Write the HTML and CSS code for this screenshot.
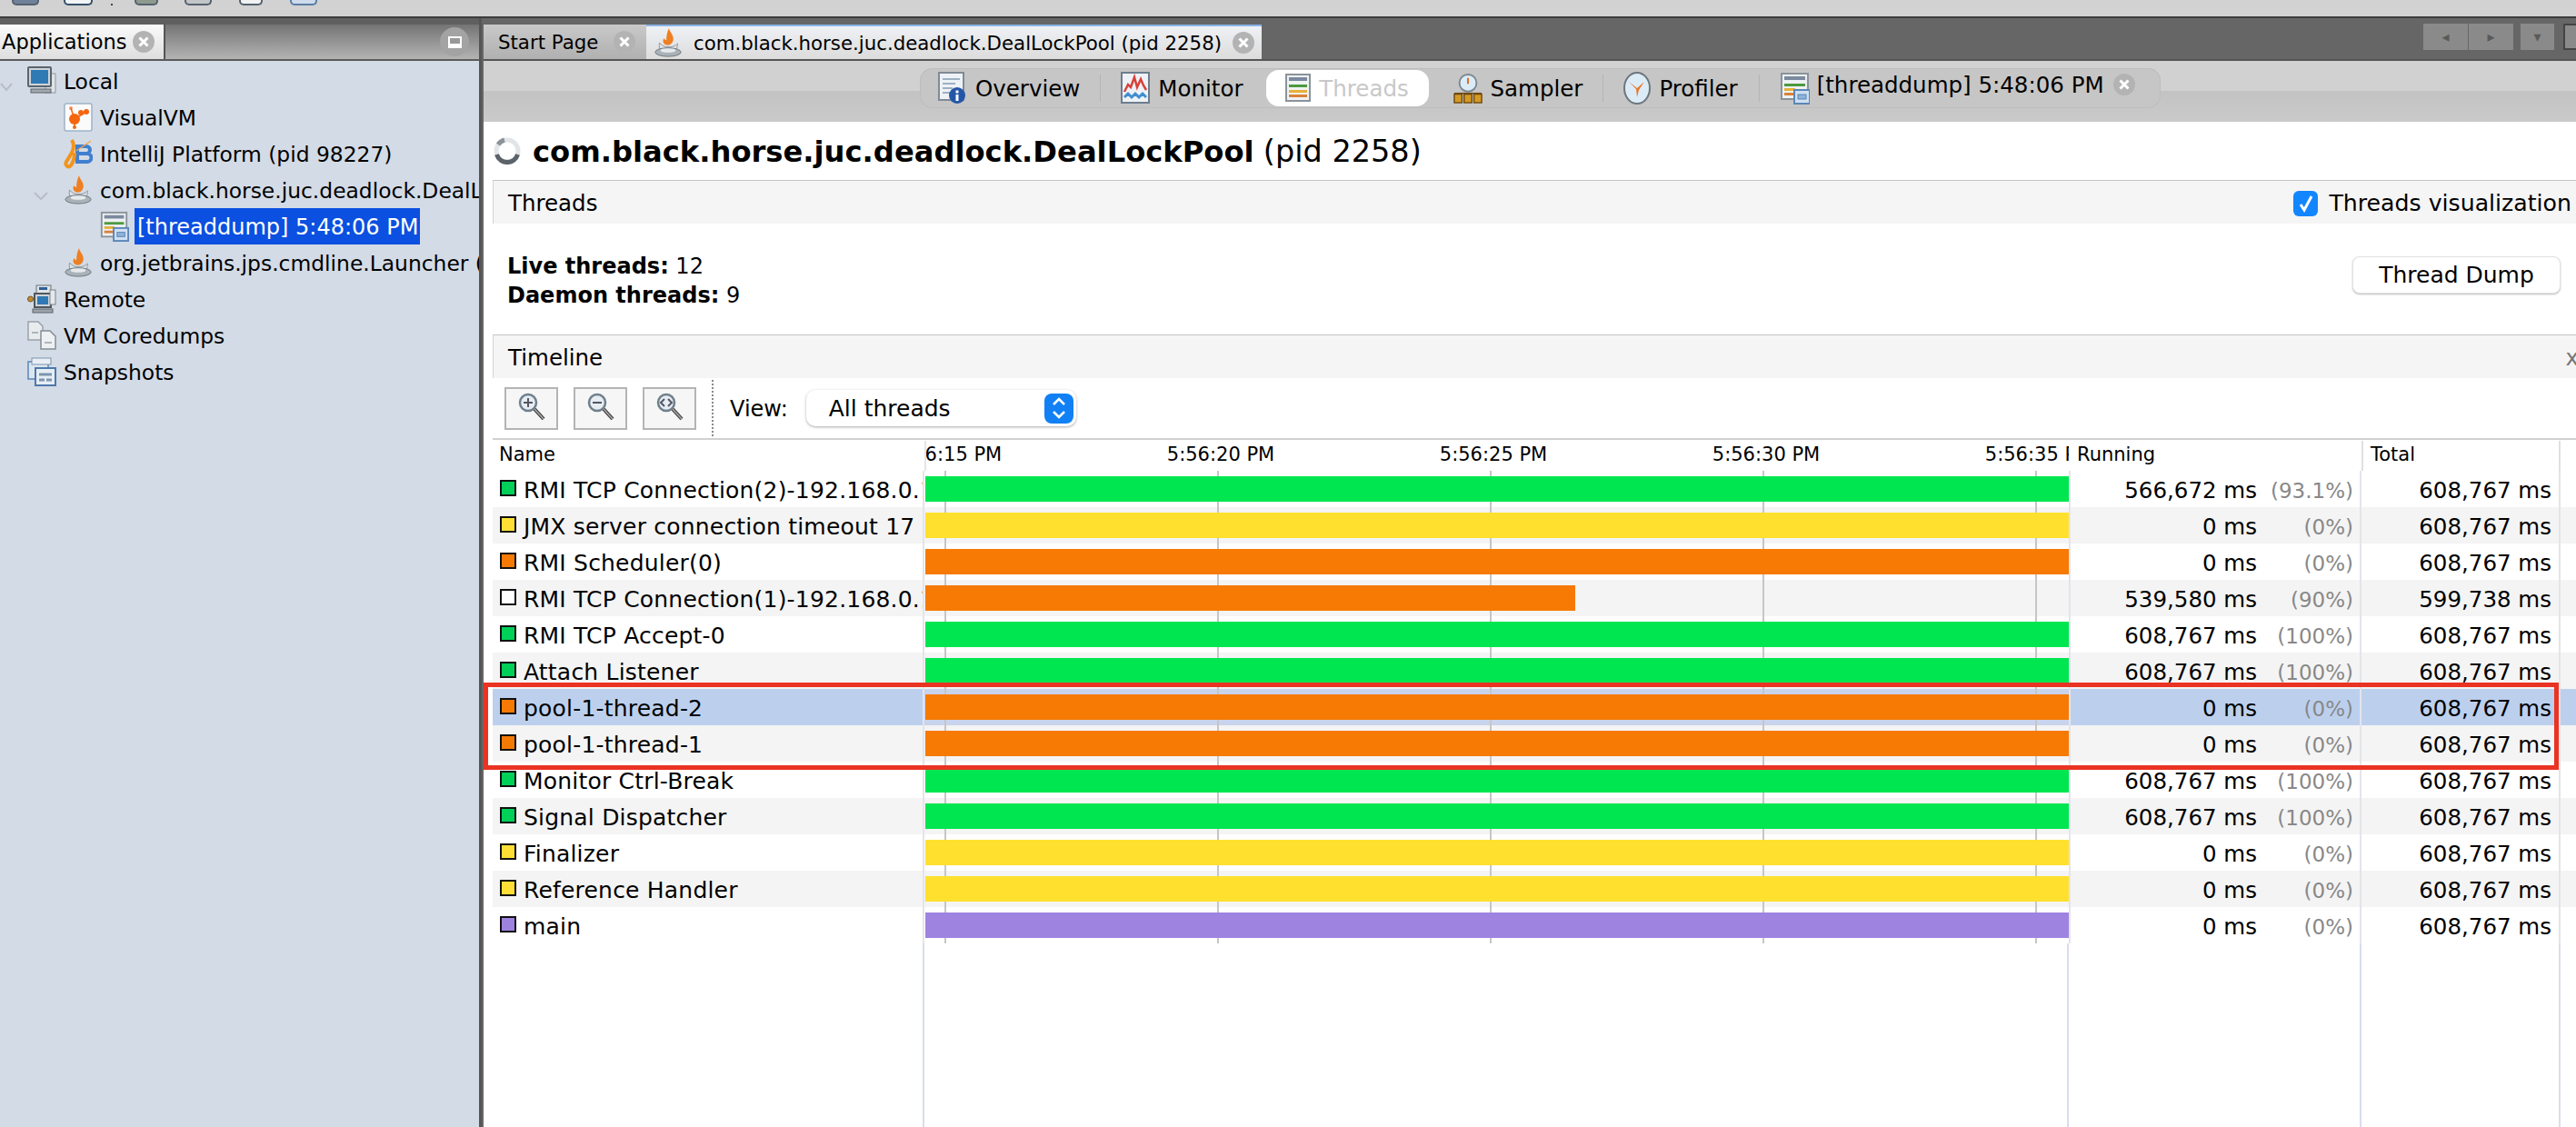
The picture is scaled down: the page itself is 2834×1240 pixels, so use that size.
FILE: index.html
```html
<!DOCTYPE html>
<html lang="en">

<head>
    <meta charset="utf-8">
    <title>VisualVM</title>
    <link rel="stylesheet" href="styles.css">
</head>

<body>
    <!-- shared icons -->
    <svg class="defs" width="0" height="0">
        <symbol id="i-java" viewBox="0 0 32 36">
            <path d="M17 1c1 5 6 8 5 14-1 4-4 6-7 6-4-1-6-4-4-8 1 1 2 2 3 2 0-5 1-10 3-14z" fill="#ee7f22"/>
            <path d="M6 18c-1 4 0 9 3 11h14c3-2 4-6 4-10-2 3-7 4-11 4s-8-2-10-5z" fill="#dfe3e6" stroke="#8d969c"/>
            <ellipse cx="16" cy="29" rx="15" ry="5" fill="#a9b2b8" stroke="#6e777d"/>
            <ellipse cx="16" cy="27" rx="9" ry="2.5" fill="#e6eaed"/>
        </symbol>
        <symbol id="i-dump" viewBox="0 0 32 36">
            <rect x="1" y="2" width="29" height="28" fill="#eef1f3" stroke="#8a939b" stroke-width="2"/>
            <rect x="4" y="5" width="23" height="4" fill="#7b8aa0"/>
            <rect x="4" y="13" width="23" height="3" fill="#4c9a3e"/>
            <rect x="4" y="18" width="12" height="3" fill="#e8b13a"/>
            <rect x="4" y="23" width="12" height="3" fill="#d9823a"/>
            <rect x="15" y="20" width="17" height="15" fill="#cfe0f2" stroke="#5b86b8" stroke-width="2"/>
            <rect x="19" y="25" width="9" height="5" fill="#8fb2d8" stroke="#5b86b8"/>
        </symbol>
        <symbol id="i-close" viewBox="0 0 24 24">
            <circle cx="12" cy="12" r="12" fill="#b3b3b3"/>
            <path d="M7.5 7.5l9 9M16.5 7.5l-9 9" stroke="#fff" stroke-width="3"/>
        </symbol>
        <symbol id="i-zoom" viewBox="0 0 30 34">
            <circle cx="11" cy="11" r="9" fill="#e6edf2" stroke="#6f7f8c" stroke-width="2.5"/>
            <path d="M18 18l10 11" stroke="#444" stroke-width="4"/>
            <path d="M18 18l10 11" stroke="#aaa" stroke-width="1.5"/>
        </symbol>
    </svg>

    <div class="topbar">
        <span class="tb-icon tb-a"></span>
        <span class="tb-icon tb-b"></span>
        <span class="tb-dot"></span>
        <span class="tb-icon tb-c"></span>
        <span class="tb-icon tb-d"></span>
        <span class="tb-icon tb-e"></span>
        <span class="tb-icon tb-f"></span>
    </div>

    <div class="workspace">
        <aside class="apps">
            <div class="apps-tabs">
                <div class="apps-tab">Applications
                    <svg class="close"><use href="#i-close"/></svg>
                </div>
                <div class="apps-rest">
                    <span class="minimize"><i></i></span>
                </div>
            </div>
            <ul class="tree">
                <li class="tree-row">
                    <span class="twist lvl0"><svg width="14" height="10" viewBox="0 0 14 10"><path d="M1 1l6 7 6-7" fill="none" stroke="#b7bec6" stroke-width="2"/></svg></span>
                    <svg class="tree-icon" viewBox="0 0 32 32">
                        <rect x="20" y="8" width="11" height="21" fill="#dfe3e7" stroke="#8f979e"/>
                        <rect x="1" y="1" width="25" height="21" rx="1" fill="#cdd3d8" stroke="#5c646b" stroke-width="2"/>
                        <rect x="4" y="4" width="19" height="15" fill="#2f79b5"/>
                        <rect x="4" y="25" width="22" height="4" fill="#a2a9af" stroke="#5c646b"/>
                    </svg>
                    Local
                </li>
                <li class="tree-row">
                    <span class="twist lvl1"></span>
                    <svg class="tree-icon" viewBox="0 0 32 32">
                        <rect x="1" y="1" width="30" height="30" rx="2" fill="#fbfbfb" stroke="#9fb4c8" stroke-width="1.5"/>
                        <circle cx="12" cy="18" r="6" fill="#f4660e"/>
                        <circle cx="19" cy="11" r="3" fill="#f4660e"/>
                        <circle cx="25" cy="10" r="3" fill="#f4660e"/>
                        <circle cx="8" cy="6" r="2" fill="#f7926a"/>
                        <circle cx="12" cy="27" r="2" fill="#f4660e"/>
                        <path d="M12 18L8 6M12 18l13-8M12 18v9" stroke="#f4660e" stroke-width="1.5"/>
                    </svg>
                    VisualVM
                </li>
                <li class="tree-row">
                    <span class="twist lvl1"></span>
                    <svg class="tree-icon" viewBox="0 0 32 32">
                        <path d="M15 8h10a4 4 0 0 1 0 8h-10zM15 16h11a4.500 4.500 0 0 1 0 9h-11z" fill="none" stroke="#3f7fd0" stroke-width="4"/>
                        <path d="M9 1c3 5 2 10 0 14l-6 10c-2 4 2 7 5 4 3-4 4-10 4-14" fill="none" stroke="#f2941c" stroke-width="4"/>
                        <path d="M14 13L30 2" stroke="#f2a64a" stroke-width="1.500"/>
                    </svg>
                    IntelliJ Platform (pid 98227)
                </li>
                <li class="tree-row">
                    <span class="twist lvl1 open"><svg width="16" height="10" viewBox="0 0 16 10"><path d="M1 1l7 7 7-7" fill="none" stroke="#b7bec6" stroke-width="2"/></svg></span>
                    <svg class="tree-icon"><use href="#i-java"/></svg>
                    com.black.horse.juc.deadlock.DealLockPool (pid 2258)
                </li>
                <li class="tree-row">
                    <span class="twist lvl2"></span>
                    <svg class="tree-icon dump-icon"><use href="#i-dump"/></svg>
                    <span class="selected">[threaddump] 5:48:06 PM</span>
                </li>
                <li class="tree-row">
                    <span class="twist lvl1"></span>
                    <svg class="tree-icon"><use href="#i-java"/></svg>
                    org.jetbrains.jps.cmdline.Launcher (pid 98228)
                </li>
                <li class="tree-row">
                    <span class="twist lvl0"></span>
                    <svg class="tree-icon" viewBox="0 0 32 32">
                        <rect x="10" y="1" width="16" height="12" fill="#dfe3e7" stroke="#6a7279"/>
                        <rect x="13" y="3" width="9" height="3" fill="#2c5f96"/>
                        <rect x="8" y="10" width="18" height="15" fill="#cdd3d8" stroke="#4f575e" stroke-width="2"/>
                        <rect x="11" y="13" width="12" height="9" fill="#2f79b5"/>
                        <circle cx="3.500" cy="16" r="3" fill="#c9892b" stroke="#6a5a35"/>
                        <rect x="25" y="6" width="6" height="16" fill="#e6e9ec" stroke="#7b838a"/>
                        <rect x="6" y="27" width="22" height="4" fill="#9da4aa" stroke="#5c646b"/>
                    </svg>
                    Remote
                </li>
                <li class="tree-row">
                    <span class="twist lvl0"></span>
                    <svg class="tree-icon" viewBox="0 0 32 32">
                        <path d="M1 1h11l5 5v15H1z" fill="#e8ecef" stroke="#9aa2a9" stroke-width="1.500"/>
                        <path d="M15 11h10l6 6v14H15z" fill="#eef1f3" stroke="#858d94" stroke-width="1.500"/>
                        <path d="M5 13h7M19 24h8" stroke="#9aa2a9" stroke-width="1.500"/>
                    </svg>
                    VM Coredumps
                </li>
                <li class="tree-row">
                    <span class="twist lvl0"></span>
                    <svg class="tree-icon" viewBox="0 0 32 32">
                        <rect x="1" y="5" width="22" height="19" fill="#dce6f0" stroke="#5b86b8" stroke-width="1.500"/>
                        <rect x="5" y="1" width="21" height="7" fill="#e8eef4" stroke="#7d95ae"/>
                        <rect x="9" y="12" width="22" height="19" fill="#e6edf4" stroke="#4d79ab" stroke-width="2"/>
                        <path d="M13 19h14M13 25h6M21 25h6" stroke="#7d95ae" stroke-width="3"/>
                    </svg>
                    Snapshots
                </li>
            </ul>
        </aside>

        <main class="editor">
            <div class="doc-tabs">
                <div class="doc-tab start">Start Page
                    <svg class="close"><use href="#i-close"/></svg>
                </div>
                <div class="doc-tab active">
                    <svg class="doc-java"><use href="#i-java"/></svg>
                    com.black.horse.juc.deadlock.DealLockPool (pid 2258)
                    <svg class="close"><use href="#i-close"/></svg>
                </div>
                <div class="doc-nav">
                    <span class="nav-group">
                        <span class="nav-btn">&#9666;</span>
                        <span class="nav-btn">&#9656;</span>
                    </span>
                    <span class="nav-btn nav-down">&#9662;</span>
                    <span class="nav-btn nav-max"></span>
                </div>
            </div>

            <div class="view-bar">
                <div class="view-pill">
                    <div class="view-item overview">
                        <svg class="view-icon" viewBox="0 0 32 36">
                            <rect x="1" y="1" width="27" height="30" fill="#eef2f6" stroke="#7f8b96" stroke-width="2"/>
                            <path d="M5 8h19M5 13h14M5 18h11M5 23h8" stroke="#9eb0c2" stroke-width="2"/>
                            <circle cx="21" cy="26" r="9" fill="#2456a8"/>
                            <rect x="19.500" y="25" width="3" height="7" fill="#fff"/>
                            <rect x="19.500" y="20.500" width="3" height="3" fill="#fff"/>
                        </svg>
                        Overview
                    </div>
                    <span class="view-sep"></span>
                    <div class="view-item monitor">
                        <svg class="view-icon" viewBox="0 0 32 36">
                            <rect x="1" y="1" width="30" height="33" fill="#eef2f6" stroke="#6d7d8e" stroke-width="2"/>
                            <path d="M4 22l4-8 3 3 4-11 3 11 4-9 3 7 3 5" fill="none" stroke="#d8413a" stroke-width="2.500"/>
                            <path d="M4 28l4-4 4 4 4-4 4 4 4-4 4 4" fill="none" stroke="#3f8fd0" stroke-width="3"/>
                        </svg>
                        Monitor
                    </div>
                    <div class="view-item threads">
                        <svg class="view-icon thr-icon" viewBox="0 0 28 32">
                            <rect x="1" y="1" width="26" height="29" fill="#f0f2f3" stroke="#8a939b" stroke-width="2"/>
                            <rect x="4" y="4" width="20" height="4" fill="#7b8aa0"/>
                            <rect x="4" y="12" width="20" height="3" fill="#4c9a3e"/>
                            <rect x="4" y="18" width="20" height="3" fill="#e8b13a"/>
                            <rect x="4" y="23" width="20" height="3" fill="#d9823a"/>
                        </svg>
                        Threads
                    </div>
                    <div class="view-item sampler">
                        <svg class="view-icon" viewBox="0 0 34 36">
                            <circle cx="17" cy="12" r="10" fill="#dcecf7" stroke="#7c8790" stroke-width="2"/>
                            <path d="M17 6v7" stroke="#e0641a" stroke-width="2"/>
                            <rect x="1" y="25" width="9" height="10" fill="#d49a24" stroke="#6f4a10" stroke-width="1.500"/>
                            <rect x="12.500" y="25" width="9" height="10" fill="#d49a24" stroke="#6f4a10" stroke-width="1.500"/>
                            <rect x="24" y="25" width="9" height="10" fill="#d49a24" stroke="#6f4a10" stroke-width="1.500"/>
                            <path d="M1 24h32" stroke="#6f4a10" stroke-width="1.500"/>
                        </svg>
                        Sampler
                    </div>
                    <span class="view-sep"></span>
                    <div class="view-item profiler">
                        <svg class="view-icon clock-icon" viewBox="0 0 30 36">
                            <ellipse cx="15" cy="18" rx="14" ry="17" fill="#dcecf7" stroke="#6d777f" stroke-width="2"/>
                            <path d="M6 11l9 7 8-7-6 9-2 8-1-9z" fill="#e8772a"/>
                        </svg>
                        Profiler
                    </div>
                    <span class="view-sep wide"></span>
                    <div class="view-item dump">
                        <svg class="view-icon"><use href="#i-dump"/></svg>
                        <span class="dump-label">[threaddump] 5:48:06 PM</span>
                        <svg class="close"><use href="#i-close"/></svg>
                    </div>
                </div>
            </div>

            <h1 class="page-title">
                <svg class="spinner" viewBox="0 0 30 30">
                    <circle cx="15" cy="15" r="12" fill="none" stroke="#e2e5e8" stroke-width="5"/>
                    <path d="M3.500 19a12 12 0 0 0 23 0" fill="none" stroke="#5b6269" stroke-width="5"/>
                    <path d="M5 8a12 12 0 0 1 7-5" fill="none" stroke="#8b9299" stroke-width="5"/>
                </svg>
                <span class="title-text"><b>com.black.horse.juc.deadlock.DealLockPool</b> <span class="title-pid">(pid 2258)</span></span>
            </h1>

            <section class="threads-sec">
                <header class="sec-head">
                    <span>Threads</span>
                    <label class="viz">
                        <span class="check"><svg width="16" height="20" viewBox="0 0 16 20"><path d="M2 11l4 6 8-15" fill="none" stroke="#fff" stroke-width="3"/></svg></span>
                        Threads visualization
                    </label>
                </header>
                <div class="stats">
                    <div class="stat-lines">
                        <p><b>Live threads:</b> 12</p>
                        <p><b>Daemon threads:</b> 9</p>
                    </div>
                    <button class="dump-btn">Thread Dump</button>
                </div>
            </section>

            <section class="timeline-sec">
                <header class="sec-head">
                    <span>Timeline</span>
                    <span class="sec-x">x</span>
                </header>
                <div class="tl-tools">
                    <button class="zoom-btn">
                        <svg width="30" height="34"><use href="#i-zoom"/><path d="M6 11h10M11 6v10" stroke="#556" stroke-width="2"/></svg>
                    </button>
                    <button class="zoom-btn">
                        <svg width="30" height="34"><use href="#i-zoom"/><path d="M6 11h10" stroke="#556" stroke-width="2"/></svg>
                    </button>
                    <button class="zoom-btn">
                        <svg width="30" height="34"><use href="#i-zoom"/><path d="M9 7l-4 4 4 4M13 7l4 4-4 4" fill="none" stroke="#556" stroke-width="2"/></svg>
                    </button>
                    <span class="tool-sep"></span>
                    <span class="view-label">View:</span>
                    <div class="select">All threads
                        <span class="stepper"><svg width="18" height="26" viewBox="0 0 18 26"><path d="M3 9l6-6 6 6M3 17l6 6 6-6" fill="none" stroke="#fff" stroke-width="2.500"/></svg></span>
                    </div>
                </div>

                <div class="tl-table">
                    <div class="tbl-head">
                        <div class="col-name">Name</div>
                        <div class="col-time">
                            <span>5:56:15 PM</span>
                            <span>5:56:20 PM</span>
                            <span>5:56:25 PM</span>
                            <span>5:56:30 PM</span>
                            <span>5:56:35 PM</span>
                        </div>
                        <div class="col-run">Running</div>
                        <div class="col-total">Total</div>
                    </div>

                    <div class="rows">
                        <div class="row">
                            <div class="name"><i class="dot green"></i>RMI TCP Connection(2)-192.168.0.102</div>
                            <div class="time"><div class="bar green"></div></div>
                            <div class="run">566,672 ms<span class="pct">(93.1%)</span></div>
                            <div class="total">608,767 ms</div>
                        </div>
                        <div class="row alt">
                            <div class="name"><i class="dot yellow"></i>JMX server connection timeout 17</div>
                            <div class="time"><div class="bar yellow"></div></div>
                            <div class="run">0 ms<span class="pct">(0%)</span></div>
                            <div class="total">608,767 ms</div>
                        </div>
                        <div class="row">
                            <div class="name"><i class="dot orange"></i>RMI Scheduler(0)</div>
                            <div class="time"><div class="bar orange"></div></div>
                            <div class="run">0 ms<span class="pct">(0%)</span></div>
                            <div class="total">608,767 ms</div>
                        </div>
                        <div class="row alt">
                            <div class="name"><i class="dot white"></i>RMI TCP Connection(1)-192.168.0.102</div>
                            <div class="time"><div class="bar orange" style="width: 715px"></div></div>
                            <div class="run">539,580 ms<span class="pct">(90%)</span></div>
                            <div class="total">599,738 ms</div>
                        </div>
                        <div class="row">
                            <div class="name"><i class="dot green"></i>RMI TCP Accept-0</div>
                            <div class="time"><div class="bar green"></div></div>
                            <div class="run">608,767 ms<span class="pct">(100%)</span></div>
                            <div class="total">608,767 ms</div>
                        </div>
                        <div class="row alt">
                            <div class="name"><i class="dot green"></i>Attach Listener</div>
                            <div class="time"><div class="bar green"></div></div>
                            <div class="run">608,767 ms<span class="pct">(100%)</span></div>
                            <div class="total">608,767 ms</div>
                        </div>
                        <div class="row sel">
                            <div class="name"><i class="dot orange"></i>pool-1-thread-2</div>
                            <div class="time"><div class="bar orange"></div></div>
                            <div class="run">0 ms<span class="pct">(0%)</span></div>
                            <div class="total">608,767 ms</div>
                        </div>
                        <div class="row alt">
                            <div class="name"><i class="dot orange"></i>pool-1-thread-1</div>
                            <div class="time"><div class="bar orange"></div></div>
                            <div class="run">0 ms<span class="pct">(0%)</span></div>
                            <div class="total">608,767 ms</div>
                        </div>
                        <div class="row">
                            <div class="name"><i class="dot green"></i>Monitor Ctrl-Break</div>
                            <div class="time"><div class="bar green"></div></div>
                            <div class="run">608,767 ms<span class="pct">(100%)</span></div>
                            <div class="total">608,767 ms</div>
                        </div>
                        <div class="row alt">
                            <div class="name"><i class="dot green"></i>Signal Dispatcher</div>
                            <div class="time"><div class="bar green"></div></div>
                            <div class="run">608,767 ms<span class="pct">(100%)</span></div>
                            <div class="total">608,767 ms</div>
                        </div>
                        <div class="row">
                            <div class="name"><i class="dot yellow"></i>Finalizer</div>
                            <div class="time"><div class="bar yellow"></div></div>
                            <div class="run">0 ms<span class="pct">(0%)</span></div>
                            <div class="total">608,767 ms</div>
                        </div>
                        <div class="row alt">
                            <div class="name"><i class="dot yellow"></i>Reference Handler</div>
                            <div class="time"><div class="bar yellow"></div></div>
                            <div class="run">0 ms<span class="pct">(0%)</span></div>
                            <div class="total">608,767 ms</div>
                        </div>
                        <div class="row">
                            <div class="name"><i class="dot purple"></i>main</div>
                            <div class="time"><div class="bar purple"></div></div>
                            <div class="run">0 ms<span class="pct">(0%)</span></div>
                            <div class="total">608,767 ms</div>
                        </div>
                        <div class="filler">
                            <div></div><div></div><div></div><div></div>
                        </div>
                        <!-- the red box somebody drew over the screenshot -->
                        <div class="callout"></div>
                    </div>
                </div>
            </section>
        </main>
    </div>
</body>

</html>
```

FILE: styles.css
```css
* {
    box-sizing: border-box;
}

html,
body {
    margin: 0;
    height: 1240px;
    overflow: hidden;
}

body {
    display: flex;
    flex-direction: column;
    background: #555;
    color: #000;
    font-family: "DejaVu Sans", "Noto Sans", sans-serif;
    font-size: 24px;
}

.defs {
    position: absolute;
}

ul {
    list-style: none;
    margin: 0;
    padding: 0;
}

p,
h1 {
    margin: 0;
}

/* top toolbar, only the bottom of its icons is left */
.topbar {
    flex: 0 0 18px;
    display: flex;
    align-items: flex-start;
    background: #d2d2d2;
    border-bottom: 0;
}

.tb-icon {
    height: 6px;
    background: #6f8299;
    border: 2px solid #56626e;
    border-top: 0;
    border-radius: 0 0 5px 5px;
}

.tb-a {
    width: 30px;
    margin-left: 13px;
}

.tb-b {
    width: 32px;
    margin-left: 27px;
    background: #f2f4f6;
    border-color: #35516b;
}

.tb-dot {
    width: 2px;
    height: 2px;
    margin: 4px 0 0 20px;
    background: #444;
}

.tb-c {
    width: 26px;
    margin-left: 24px;
    background: #8e9a8f;
}

.tb-d {
    width: 30px;
    margin-left: 29px;
    background: #c3c6c9;
}

.tb-e {
    width: 26px;
    margin-left: 30px;
    background: #f0f2f4;
}

.tb-f {
    width: 30px;
    margin-left: 30px;
    background: #cfdcec;
    border-color: #5b7ea5;
}

.workspace {
    flex: 1;
    display: flex;
    min-height: 0;
    border-top: 2px solid #3c3c3c;
}

/* left panel */
.apps {
    flex: 0 0 527px;
    display: flex;
    flex-direction: column;
    overflow: hidden;
    background: #d3dbe6;
    white-space: nowrap;
}

.apps-tabs {
    flex: 0 0 47px;
    display: flex;
    padding-top: 7px;
    background: #5f5f5f;
    border-bottom: 2px solid #5b5b5b;
    font-size: 22.5px;
}

.apps-tab {
    width: 180px;
    display: flex;
    align-items: center;
    justify-content: space-between;
    padding: 0 10px 0 2px;
    background: linear-gradient(#fafafa, #dedede);
}

.apps-rest {
    flex: 1;
    display: flex;
    align-items: center;
    justify-content: flex-end;
    padding-right: 11px;
    border-left: 2px solid #555;
    background: linear-gradient(#747474, #b4b4b4);
}

.minimize {
    width: 32px;
    height: 32px;
    display: flex;
    align-items: center;
    justify-content: center;
    border-radius: 50%;
    background: #a3a3a3;
}

.minimize i {
    width: 15px;
    height: 13px;
    border: 2px solid #fff;
    border-bottom-width: 5px;
    background: #999;
}

.close {
    flex: none;
    width: 24px;
    height: 24px;
}

.tree {
    padding-top: 2px;
    font-size: 23.4px;
}

.tree-row {
    height: 40px;
    display: flex;
    align-items: center;
    padding-top: 2px;
}

.twist {
    flex: none;
    height: 20px;
    margin-top: -2px;
}

.lvl0 {
    width: 30px;
}

.lvl1 {
    width: 70px;
}

.lvl1.open {
    padding-left: 37px;
}

.lvl2 {
    width: 110px;
}

.tree-icon {
    flex: none;
    width: 32px;
    height: 34px;
    margin: -2px 8px 0 0;
}

.dump-icon {
    margin-right: 6px;
}

.selected {
    width: 314px;
    height: 40px;
    margin-top: -2px;
    padding: 2px 0 0 3px;
    font-size: 24px;
    line-height: 38px;
    background: #0b50e0;
    color: #fff;
}

/* right side */
.editor {
    flex: 1;
    min-width: 0;
    display: flex;
    flex-direction: column;
    margin-left: 3px;
    background: #fff;
    border-left: 2px solid #666;
    white-space: nowrap;
}

.doc-tabs {
    flex: 0 0 47px;
    display: flex;
    padding-top: 7px;
    background: #666;
    border-bottom: 2px solid #555;
    font-size: 21.3px;
}

.doc-tab {
    display: flex;
    align-items: center;
    height: 38px;
}

.doc-tab.start {
    width: 179px;
    justify-content: space-between;
    padding: 0 12px 0 16px;
    background: linear-gradient(#c9c9c9, #b0b0b0);
}

.doc-tab.active {
    width: 677px;
    justify-content: space-between;
    padding: 0 8px;
    background: linear-gradient(#eef1f5, #dcdcdc);
    border-top: 2px solid #8ab4e8;
}

.doc-java {
    flex: none;
    width: 32px;
    height: 34px;
}

.doc-nav {
    flex: 1;
    display: flex;
    justify-content: flex-end;
    align-items: flex-start;
    gap: 8px;
    margin-top: -1px;
}

.nav-group {
    display: flex;
    gap: 1px;
}

.nav-btn {
    width: 49px;
    height: 29px;
    display: flex;
    align-items: center;
    justify-content: center;
    background: #8a8a8a;
    color: #5a5a5a;
    font-size: 16px;
}

.nav-down {
    width: 37px;
    margin-right: 2px;
}

.nav-max {
    width: 14px;
    border: 2px solid #444;
    border-right: 0;
}

.view-bar {
    flex: 0 0 67px;
    display: flex;
    justify-content: flex-start;
    padding: 8px 0 0 480px;
    background: linear-gradient(#d1d1d1, #d1d1d1 49%, #c3c3c3 50%, #cacaca);
}

.view-pill {
    width: 1365px;
    height: 44px;
    display: flex;
    align-items: center;
    padding-left: 20px;
    border-radius: 14px;
    background: #c6c6c6;
    box-shadow: inset 0 0 0 1px #bdbdbd;
    font-size: 24.5px;
}

.view-item {
    display: flex;
    align-items: center;
    gap: 9px;
}

.view-icon {
    flex: none;
    width: 32px;
    height: 36px;
}

.view-sep {
    width: 1px;
    height: 30px;
    margin: 0 22px;
    background: #b5b5b5;
}

.view-sep.wide {
    margin: 0 23px;
}

.view-item.threads {
    width: 179px;
    height: 40px;
    justify-content: center;
    margin-left: 25px;
    border-radius: 14px;
    background: #fff;
    color: #c8c8c8;
}

.thr-icon {
    width: 28px;
    height: 32px;
}

.view-item.sampler {
    margin-left: 27px;
}

.clock-icon {
    width: 30px;
}

.dump-label {
    margin-top: -8px;
}

.view-item.dump {
    gap: 8px;
}

.view-item.dump .close {
    margin: -8px 0 0 2px;
}

.page-title {
    flex: 0 0 64px;
    display: flex;
    align-items: center;
    gap: 13px;
    padding-left: 11px;
    font-size: 32.2px;
    font-weight: 400;
}

.title-pid {
    font-size: 33.5px;
}

.spinner {
    flex: none;
    width: 30px;
    height: 30px;
}

.sec-head {
    height: 48px;
    display: flex;
    justify-content: space-between;
    align-items: center;
    padding: 2px 0 0 16px;
    background: #f5f5f5;
    border-top: 1px solid #c4c4c4;
    border-left: 1px solid #d4d4d4;
    font-size: 24.5px;
}

.threads-sec,
.timeline-sec {
    margin-left: 10px;
}

.viz {
    display: flex;
    align-items: center;
    gap: 12px;
    padding-right: 5px;
    font-size: 25.2px;
}

.check {
    width: 27px;
    height: 28px;
    display: flex;
    align-items: center;
    justify-content: center;
    border-radius: 6px;
    background: #1286ff;
}

.stats {
    height: 122px;
    display: flex;
    justify-content: space-between;
    padding: 31px 17px 0 16px;
}

.stat-lines p {
    height: 32px;
    line-height: 32px;
}

.dump-btn {
    width: 229px;
    height: 41px;
    margin-top: 5px;
    padding: 0;
    background: #fff;
    border: 1px solid #e2e2e2;
    border-radius: 8px;
    box-shadow: 0 1px 2px #bbb;
    font: inherit;
    font-size: 25px;
}

.timeline-sec {
    flex: 1;
    min-height: 0;
    display: flex;
    flex-direction: column;
}

.sec-x {
    margin-right: -3px;
    color: #777;
}

.tl-tools {
    flex: 0 0 68px;
    display: flex;
    align-items: center;
    padding-left: 13px;
    border-bottom: 2px solid #d0d0d0;
}

.zoom-btn {
    width: 59px;
    height: 47px;
    display: flex;
    align-items: center;
    justify-content: center;
    margin-right: 17px;
    padding: 0;
    background: #f6f6f6;
    border: 2px solid #b4b4b4;
}

.tool-sep {
    height: 62px;
    margin-right: 18px;
    border-left: 2px dotted #8a8a8a;
}

.view-label {
    margin: 2px 20px 0 0;
}

.select {
    width: 297px;
    height: 40px;
    display: flex;
    align-items: center;
    justify-content: space-between;
    padding: 0 3px 0 25px;
    border-radius: 10px;
    background: #fff;
    box-shadow: 0 1px 3px #aaa;
    font-size: 25px;
}

.stepper {
    width: 32px;
    height: 33px;
    display: flex;
    align-items: center;
    justify-content: center;
    border-radius: 8px;
    background: #1180f5;
}

.tl-table {
    flex: 1;
    min-height: 0;
    display: flex;
    flex-direction: column;
}

.tbl-head {
    flex: 0 0 34px;
    display: grid;
    grid-template-columns: 475px 1259px 322px 219px;
    padding-top: 1px;
    font-size: 21px;
    line-height: 30px;
}

.col-name {
    padding-left: 7px;
}

.col-time {
    display: flex;
    margin-left: 0;
    overflow: hidden;
    border-left: 2px solid #e4e4ec;
}

.col-time span {
    flex: 0 0 300px;
    text-align: center;
}

.col-time span:first-child {
    margin-left: -126px;
}

.col-run {
    padding-left: 9px;
}

.col-total {
    padding-left: 8px;
    border-left: 2px solid #e0e0e0;
    border-right: 2px solid #e0e0e0;
}

.rows {
    flex: 1;
    min-height: 0;
    position: relative;
    display: flex;
    flex-direction: column;
    background: #f7f7f7;
}

.row {
    flex: 0 0 40px;
    display: grid;
    grid-template-columns: 475px 1259px 322px 219px;
    align-items: stretch;
    background: #fff;
}

.row.alt {
    background: #f4f4f4;
}

.row.sel {
    background: #bcd0ee;
}

.name {
    display: flex;
    align-items: center;
    overflow: hidden;
    padding: 3px 0 0 8px;
    white-space: nowrap;
    border-right: 2px solid #e4e4ec;
    font-size: 25px;
    letter-spacing: 0.2px;
}

.dot {
    flex: none;
    width: 18px;
    height: 18px;
    margin: -6px 8px 0 0;
    border: 2px solid #111;
}

.dot.green {
    background: #00cf58;
}

.dot.yellow {
    background: #ffdf36;
}

.dot.orange {
    background: #f57a05;
}

.dot.white {
    background: #fff;
}

.dot.purple {
    background: #9e82e0;
}

/* gridlines run behind the bars */
.time {
    padding-top: 6px;
    padding-left: 1px;
    background: linear-gradient(90deg, #c6c6c6 2px, transparent 2px) 22px 0 / 300px 100% repeat-x;
}

.sel .time {
    background-color: #c9d3ec;
}

.bar {
    height: 28px;
}

.bar.green {
    background: #00e650;
}

.bar.yellow {
    background: #ffe02e;
}

.bar.orange {
    background: #f67a03;
}

.bar.purple {
    background: #9f83e1;
}

.run,
.total {
    display: flex;
    align-items: center;
    justify-content: flex-end;
    padding-top: 3px;
    font-size: 24.5px;
}

.run {
    padding-right: 7px;
    border-left: 2px solid #e4e4ec;
    border-right: 2px solid #e4e4ec;
}

.pct {
    width: 106px;
    font-size: 23px;
    text-align: right;
    color: #888;
}

.total {
    padding-right: 8px;
    border-right: 2px solid #e4e4ec;
}

.filler {
    flex: 1;
    display: grid;
    grid-template-columns: 475px 1259px 322px 219px;
    background: #fff;
}

.filler div {
    border-right: 2px solid #d9dcf0;
}

.callout {
    position: absolute;
    left: -10px;
    top: 233px;
    width: 2283px;
    height: 96px;
    border: 5px solid #ea3323;
}
```
